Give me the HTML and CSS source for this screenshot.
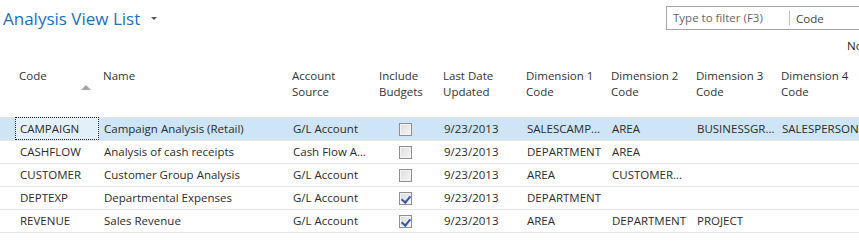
FILE: index.html
```html
<!DOCTYPE html>
<html lang="en">
  <head>
    <meta charset="UTF-8" />
    <title>Analysis View List</title>
    <link rel="stylesheet" href="styles.css">
  </head>
  <body>
    <div class="page">
      <div class="top-bar">
        <h1 class="page-title">Analysis View List <span class="title-arrow"></span></h1>
        <div class="filter-box">
          <span class="filter-input">Type to filter (F3)</span>
          <span class="filter-field">Code</span>
        </div>
      </div>
      <div class="filter-status">No filters applied</div>

      <table class="list">
        <colgroup>
          <col class="c-gap" />
          <col class="c-code" />
          <col class="c-name" />
          <col class="c-source" />
          <col class="c-budget" />
          <col class="c-date" />
          <col class="c-dim" />
          <col class="c-dim" />
          <col class="c-dim" />
          <col class="c-dim4" />
        </colgroup>
        <thead>
          <tr>
            <th></th>
            <th class="sorted">Code<span class="sort-arrow"></span></th>
            <th>Name</th>
            <th>Account<br />Source</th>
            <th>Include<br />Budgets</th>
            <th>Last Date<br />Updated</th>
            <th>Dimension 1<br />Code</th>
            <th>Dimension 2<br />Code</th>
            <th>Dimension 3<br />Code</th>
            <th>Dimension 4<br />Code</th>
          </tr>
        </thead>
        <tbody>
          <tr class="selected">
            <td></td>
            <td class="focus">CAMPAIGN</td>
            <td>Campaign Analysis (Retail)</td>
            <td>G/L Account</td>
            <td><span class="check"></span></td>
            <td>9/23/2013</td>
            <td>SALESCAMP...</td>
            <td>AREA</td>
            <td>BUSINESSGR...</td>
            <td>SALESPERSON</td>
          </tr>
          <tr>
            <td></td>
            <td>CASHFLOW</td>
            <td>Analysis of cash receipts</td>
            <td>Cash Flow A...</td>
            <td><span class="check"></span></td>
            <td>9/23/2013</td>
            <td>DEPARTMENT</td>
            <td>AREA</td>
            <td></td>
            <td></td>
          </tr>
          <tr>
            <td></td>
            <td>CUSTOMER</td>
            <td>Customer Group Analysis</td>
            <td>G/L Account</td>
            <td><span class="check"></span></td>
            <td>9/23/2013</td>
            <td>AREA</td>
            <td>CUSTOMER...</td>
            <td></td>
            <td></td>
          </tr>
          <tr>
            <td></td>
            <td>DEPTEXP</td>
            <td>Departmental Expenses</td>
            <td>G/L Account</td>
            <td><span class="check checked"></span></td>
            <td>9/23/2013</td>
            <td>DEPARTMENT</td>
            <td></td>
            <td></td>
            <td></td>
          </tr>
          <tr>
            <td></td>
            <td>REVENUE</td>
            <td>Sales Revenue</td>
            <td>G/L Account</td>
            <td><span class="check checked"></span></td>
            <td>9/23/2013</td>
            <td>AREA</td>
            <td>DEPARTMENT</td>
            <td>PROJECT</td>
            <td></td>
          </tr>
        </tbody>
      </table>
    </div>
  </body>
</html>
```

FILE: styles.css
```css
* {
  margin: 0;
  padding: 0;
  box-sizing: border-box;
}

body {
  font-family: "Open Sans", "Noto Sans", sans-serif;
  font-size: 11.5px;
  color: #2b2b2b;
  background: white;
  overflow: hidden;
}

.page {
  width: 859px;
  height: 243px;
  overflow: hidden;
}

.top-bar {
  display: flex;
  justify-content: space-between;
  align-items: flex-start;
  height: 36px;
}

.page-title {
  font-size: 17px;
  font-weight: 400;
  color: #1b6fc0;
  padding: 7px 0 0 3px;
  line-height: 24px;
  white-space: nowrap;
}

.title-arrow {
  display: inline-block;
  width: 0;
  height: 0;
  border-left: 3px solid transparent;
  border-right: 3px solid transparent;
  border-top: 3px solid #555;
  margin-left: 6px;
  vertical-align: 5px;
}

.filter-box {
  display: flex;
  align-items: center;
  margin-top: 6px;
  width: 193px;
  height: 24px;
  border: 1px solid #a6a6a6;
  border-right: none;
  flex-shrink: 0;
  color: #666;
}

.filter-input {
  width: 123px;
  padding-left: 6px;
  border-right: 1px solid #bdbdbd;
  line-height: 14px;
  white-space: nowrap;
}

.filter-field {
  padding-left: 6px;
  color: #444;
}

.filter-status {
  padding-left: 847px;
  white-space: nowrap;
  line-height: 16px;
  margin-top: 2px;
  color: #222;
}

.list {
  width: 888px;
  table-layout: fixed;
  border-collapse: collapse;
  margin-top: 10px;
}

.c-gap { width: 15px; }
.c-code { width: 84px; }
.c-name { width: 189px; }
.c-source { width: 87px; }
.c-budget { width: 64px; }
.c-date { width: 83px; }
.c-dim { width: 85px; }
.c-dim4 { width: 111px; }

.list th {
  text-align: left;
  font-weight: 400;
  vertical-align: top;
  line-height: 16px;
  height: 53px;
  padding: 4px 0 0 4px;
  color: #333;
  white-space: nowrap;
}

.list th.sorted {
  position: relative;
}

.sort-arrow {
  position: absolute;
  left: 66px;
  top: 21px;
  width: 0;
  height: 0;
  border-left: 5px solid transparent;
  border-right: 5px solid transparent;
  border-bottom: 5px solid #a5a5a5;
}

.list td {
  height: 23px;
  padding: 0 0 0 5px;
  border-bottom: 1px solid #e6e6e6;
  white-space: nowrap;
  overflow: hidden;
}

.list tbody tr:first-child td {
  border-top: 1px solid #e3e3e3;
}

.list tr.selected td {
  background: #cde5f7;
}

.list tr.selected td.focus {
  background: #e3f0fa;
  outline: 1px dotted #222;
  outline-offset: -1px;
}

.check {
  display: inline-block;
  width: 13px;
  height: 13px;
  margin-left: 19px;
  vertical-align: -3px;
  border: 1px solid #8e8e8e;
  background: linear-gradient(135deg, #dcdcdc 0%, #f6f6f6 100%);
  box-shadow: inset 0 0 0 1px #f4f4f4;
  position: relative;
}

.check.checked::after {
  content: "";
  position: absolute;
  left: 3px;
  top: 1px;
  width: 4px;
  height: 7px;
  border-right: 2px solid #3a56a8;
  border-bottom: 2px solid #3a56a8;
  transform: rotate(40deg);
}
```
